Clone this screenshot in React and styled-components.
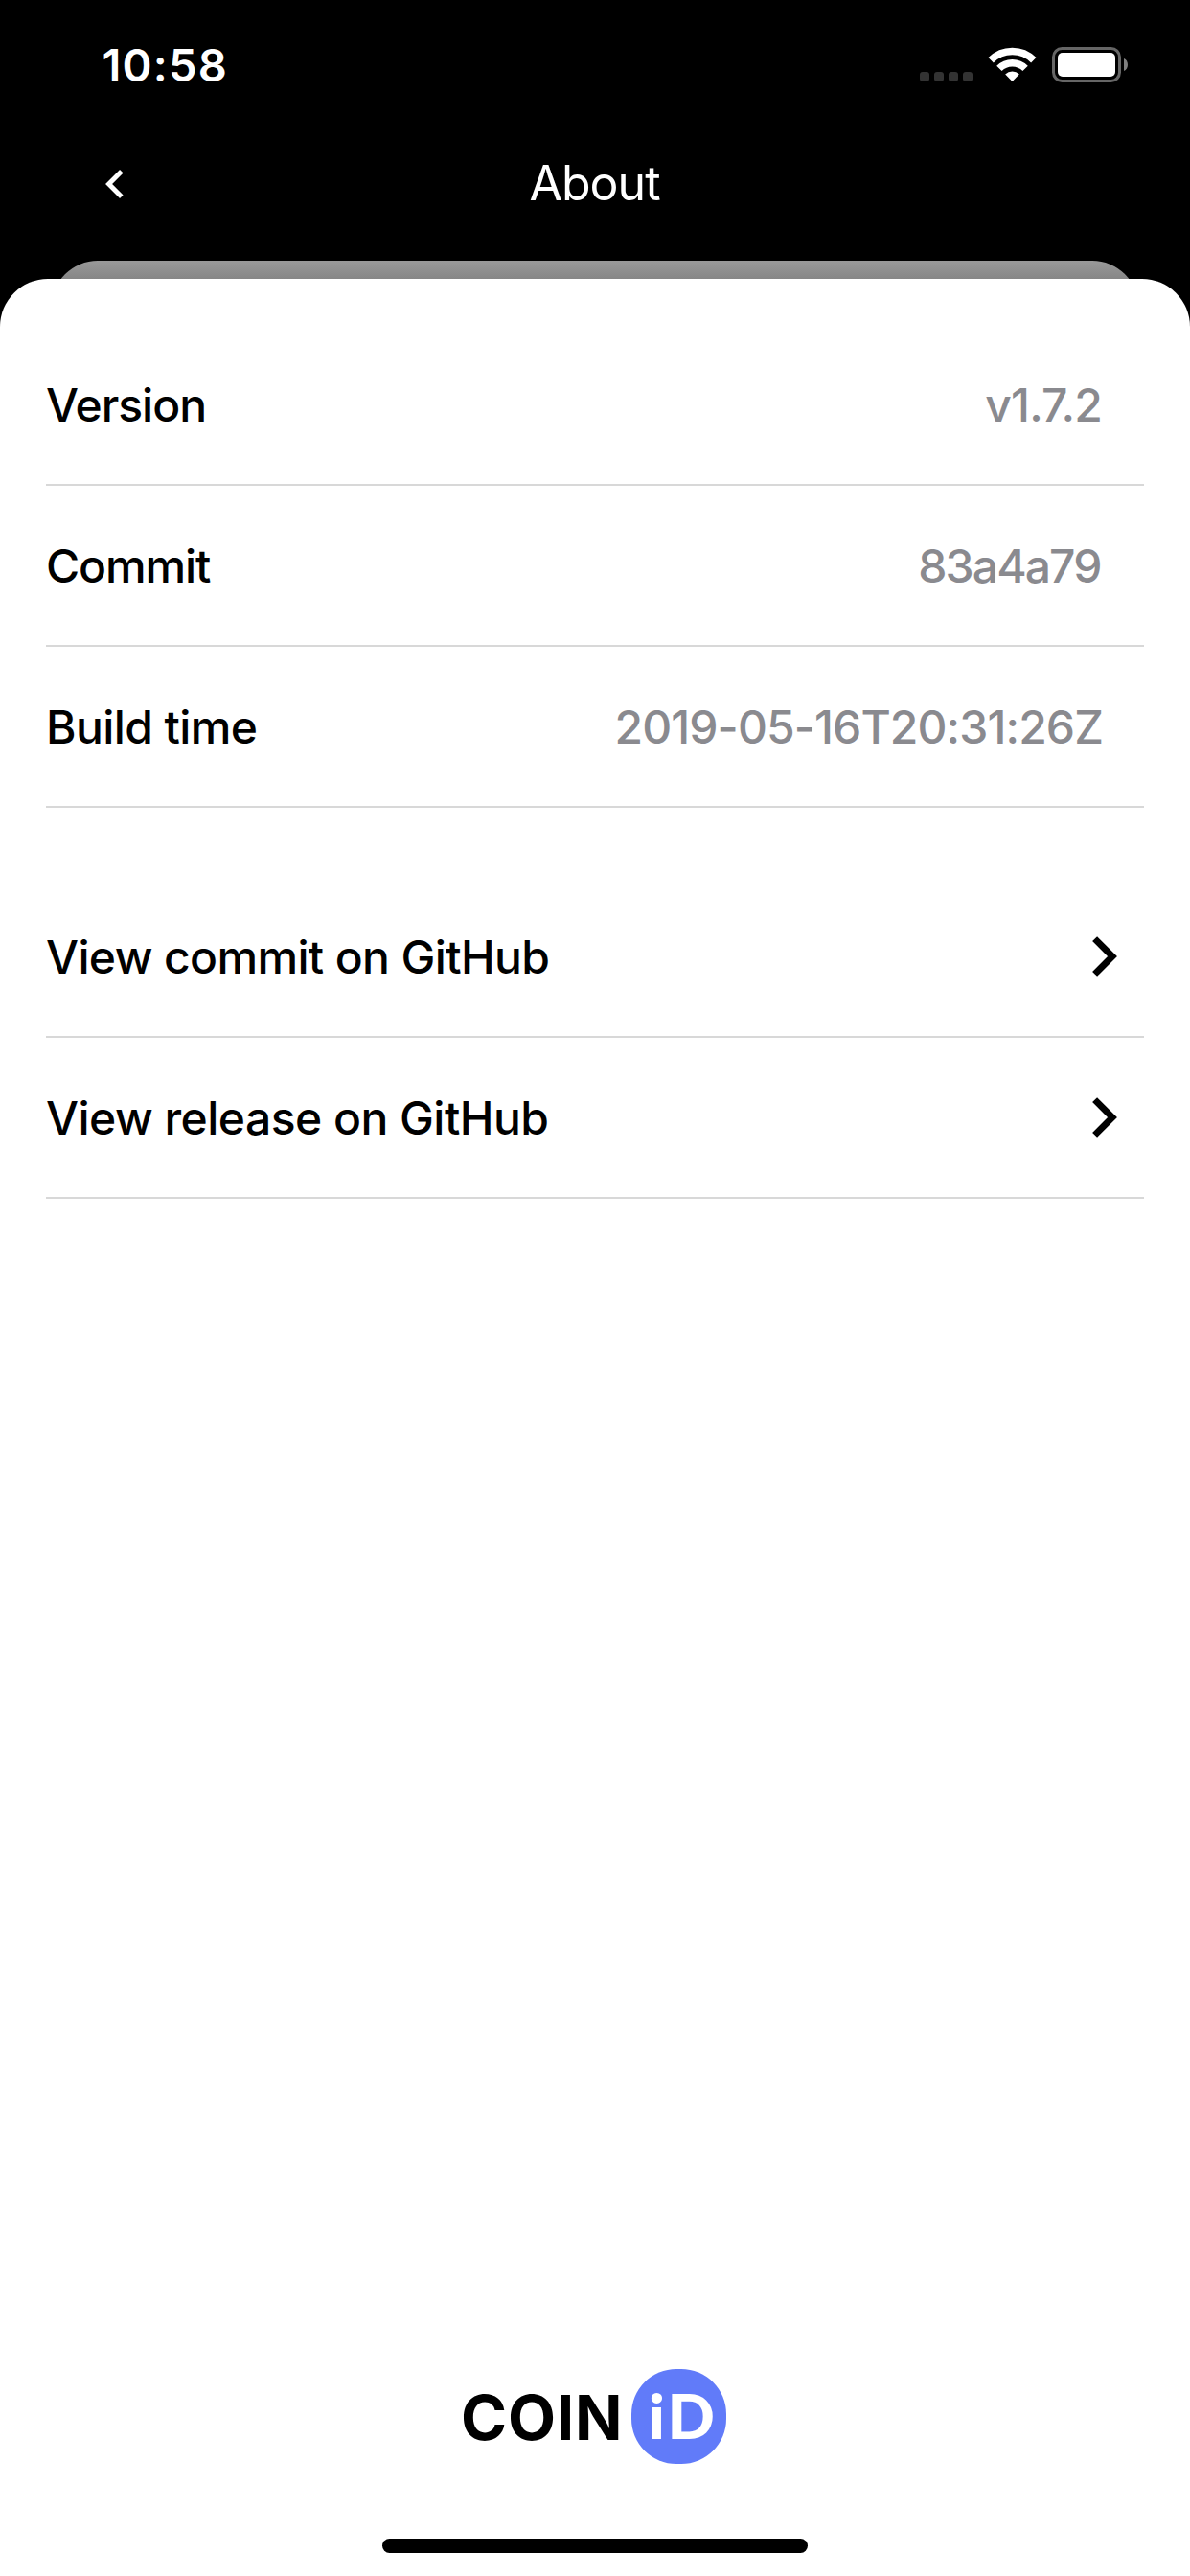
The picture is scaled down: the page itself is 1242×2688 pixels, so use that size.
import React from "react";
import styled, { createGlobalStyle } from "styled-components";

const GlobalStyle = createGlobalStyle`
  * { box-sizing: border-box; }
  body { margin: 0; background: #000; }
`;

const Screen = styled.div`
  width: 1242px;
  height: 2688px;
  display: flex;
  flex-direction: column;
  background: #000;
  color: #000;
  font-family: Inter, "Liberation Sans", sans-serif;
  overflow: hidden;
`;

const StatusBar = styled.div`
  display: flex;
  align-items: center;
  justify-content: space-between;
  height: 136px;
  padding: 0 65px 0 106.5px;
`;

const Clock = styled.span`
  color: #fff;
  font-size: 47px;
  font-weight: 600;
  line-height: 56px;
  letter-spacing: 1.2px;
`;

const StatusIcons = styled.div`
  display: flex;
  align-items: center;
  padding-bottom: 2px;
`;

const NavBar = styled.header`
  display: grid;
  grid-template-columns: 180px 1fr 180px;
  align-items: center;
  height: 112px;
  margin-bottom: 24px;
`;

const BackButton = styled.button`
  display: flex;
  padding: 0 0 0 108px;
  border: 0;
  background: none;
`;

const Title = styled.h1`
  margin: 0;
  padding: 0 1px 2px 0;
  color: #fff;
  font-size: 50px;
  font-weight: 400;
  line-height: 60px;
  letter-spacing: -1px;
  text-align: center;
`;

const CardBehind = styled.div`
  flex: none;
  height: 60px;
  margin: 0 54px -41px;
  border-radius: 48px 48px 0 0;
  background: linear-gradient(#999 0, #868686 19px);
`;

const Sheet = styled.main`
  position: relative;
  flex: 1;
  display: flex;
  flex-direction: column;
  padding: 48px 48px 0;
  border-radius: 50px 50px 0 0;
  background: #fff;
`;

const Group = styled.section`
  margin-bottom: 72px;
`;

const Row = styled.div`
  display: flex;
  align-items: center;
  justify-content: space-between;
  height: 168px;
  padding-right: ${(p) => (p.$link ? "26px" : "44px")};
  border-bottom: 2px solid #d8d8d8;
  font-size: 48px;
  font-weight: 500;
  line-height: 58px;
`;

const Label = styled.span`
  padding-top: 2px;
  letter-spacing: ${(p) => p.$tracking}px;
`;

const Value = styled(Label)`
  color: #8a8a8f;
  margin-right: ${(p) => p.$inset || 0}px;
`;

const Footer = styled.footer`
  display: flex;
  flex-direction: column;
  align-items: center;
  gap: 78px;
  margin-top: auto;
  padding-bottom: 24px;
`;

const Logo = styled.div`
  display: flex;
  align-items: center;
  width: 276px;
  height: 99px;
  font-size: 65px;
  font-weight: 700;
`;

const Wordmark = styled.span`
  width: 178px;
  margin: 2px 0 0 -2px;
  line-height: 99px;
  letter-spacing: 0.9px;
  white-space: nowrap;
`;

const Badge = styled.span`
  flex: none;
  width: 99px;
  height: 99px;
  padding-left: 18px;
  border-radius: 47px;
  background: #617bf9;
  color: #fff;
  font-family: Lato, "Liberation Sans", sans-serif;
  font-weight: 900;
  line-height: 97px;
  letter-spacing: 3px;
  white-space: nowrap;
`;

const HomeIndicator = styled.div`
  width: 444px;
  height: 15px;
  border-radius: 8px;
  background: #000;
`;

function StatusGlyphs() {
  return (
    <svg width="217" height="38" viewBox="960 48 217 38" fill="none">
      {[960, 975, 990, 1005].map((x) => (
        <rect key={x} x={x} y="75" width="10" height="10" rx="3" fill="#333" />
      ))}
      <g stroke="#fff">
        <path d="M1034.2 62.7A31.5 31.5 0 0 1 1078.8 62.7" strokeWidth="7.6" />
        <path d="M1042.9 71.4A19.2 19.2 0 0 1 1070.1 71.4" strokeWidth="7.6" />
      </g>
      <path d="M1056.5 85L1049.2 77.5A10.5 10.5 0 0 1 1063.8 77.5Z" fill="#fff" />
      <rect x="1099.5" y="50.5" width="69" height="34" rx="9" stroke="#666" strokeWidth="3" />
      <rect x="1104" y="55" width="60" height="25" rx="5" fill="#fff" />
      <path d="M1173 61C1178.3 63 1178.3 72 1173 74Z" fill="#808080" />
    </svg>
  );
}

function BackIcon() {
  return (
    <svg width="22" height="32" viewBox="108 176 22 32" fill="none">
      <path d="M126.8 178.8L113.6 192L126.8 205.2" stroke="#fff" strokeWidth="5" />
    </svg>
  );
}

function ForwardIcon() {
  return (
    <svg width="30" height="44" viewBox="1138 976 30 44" fill="none">
      <path d="M1142.6 979.6L1161 998L1142.6 1016.4" stroke="#000" strokeWidth="7" />
    </svg>
  );
}

export default function App() {
  return (
    <Screen>
      <GlobalStyle />
      <StatusBar>
        <Clock>10:58</Clock>
        <StatusIcons>
          <StatusGlyphs />
        </StatusIcons>
      </StatusBar>
      <NavBar>
        <BackButton aria-label="Back">
          <BackIcon />
        </BackButton>
        <Title>About</Title>
      </NavBar>
      <CardBehind />
      <Sheet>
        <Group>
          <Row>
            <Label $tracking={-1}>Version</Label>
            <Value $tracking={-0.85}>v1.7.2</Value>
          </Row>
          <Row>
            <Label $tracking={-1.1}>Commit</Label>
            <Value $tracking={-1.9} $inset={1.5}>83a4a79</Value>
          </Row>
          <Row>
            <Label $tracking={-0.6}>Build time</Label>
            <Value $tracking={-0.9} $inset={-1}>2019-05-16T20:31:26Z</Value>
          </Row>
        </Group>
        <Group>
          <Row $link>
            <Label $tracking={-0.63}>View commit on GitHub</Label>
            <ForwardIcon />
          </Row>
          <Row $link>
            <Label $tracking={-0.53}>View release on GitHub</Label>
            <ForwardIcon />
          </Row>
        </Group>
        <Footer>
          <Logo>
            <Wordmark>COIN</Wordmark>
            <Badge>iD</Badge>
          </Logo>
          <HomeIndicator />
        </Footer>
      </Sheet>
    </Screen>
  );
}
